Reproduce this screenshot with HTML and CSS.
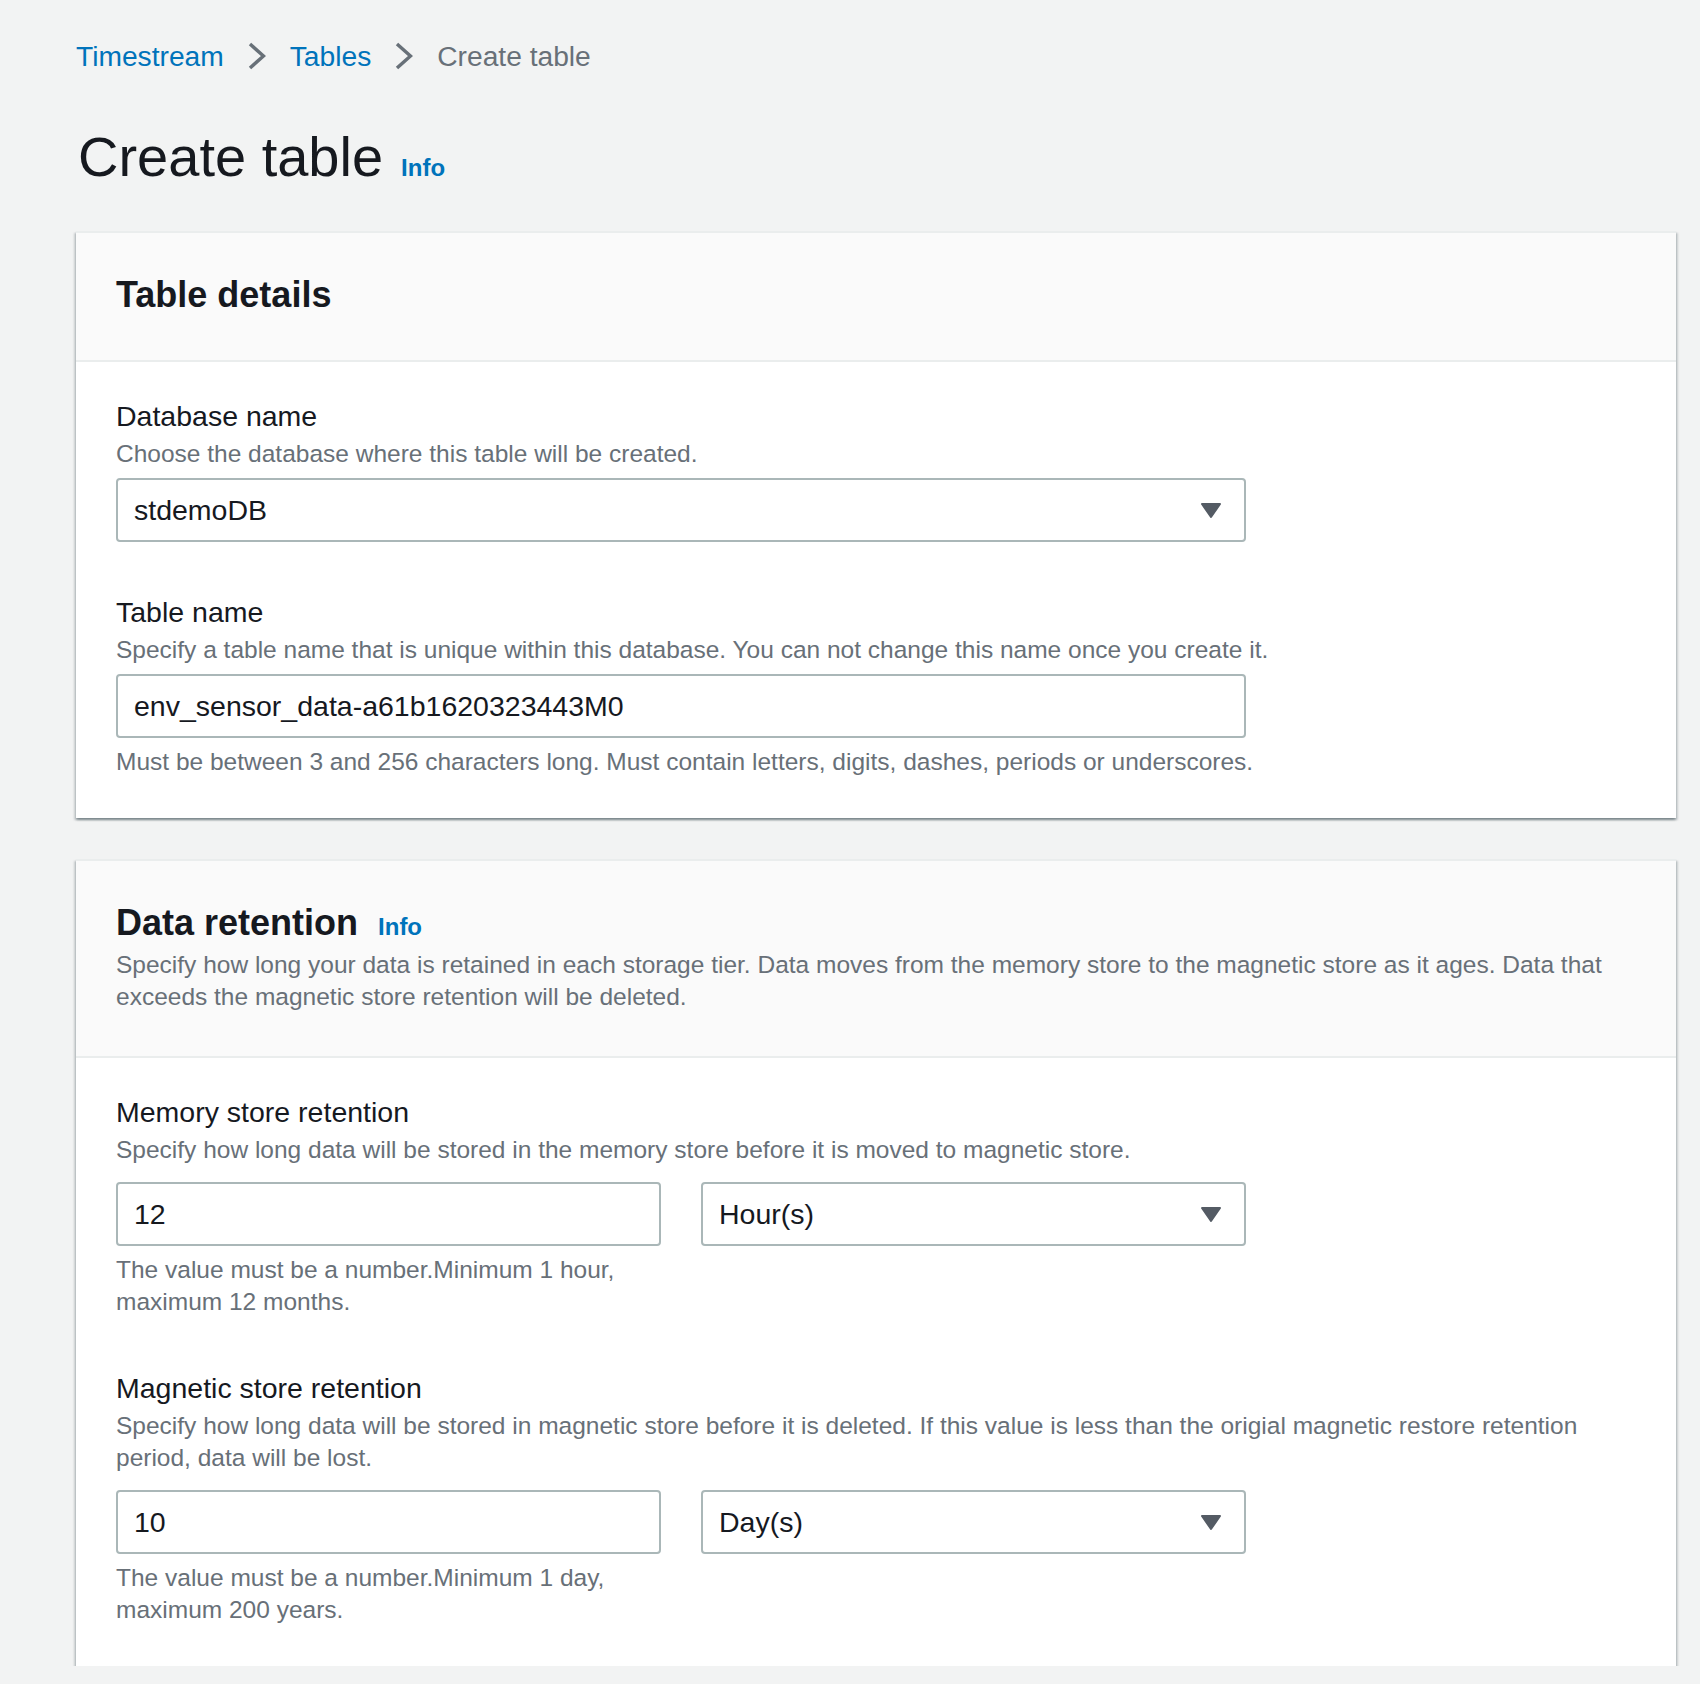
FILE: index.html
```html
<!DOCTYPE html>
<html lang="en">
<head>
<meta charset="utf-8">
<title>Create table</title>
<link rel="stylesheet" href="styles.css">
</head>
<body>
<div class="page">
  <nav class="breadcrumbs">
    <a class="crumb-link" href="#">Timestream</a>
    <svg class="crumb-sep" width="18" height="28" viewBox="0 0 18 28"><polyline points="2,2 15.5,14 2,26" fill="none" stroke="#687078" stroke-width="3.5"/></svg>
    <a class="crumb-link" href="#">Tables</a>
    <svg class="crumb-sep" width="18" height="28" viewBox="0 0 18 28"><polyline points="2,2 15.5,14 2,26" fill="none" stroke="#687078" stroke-width="3.5"/></svg>
    <span class="crumb-current">Create table</span>
  </nav>

  <h1 class="page-title">Create table<a class="info" href="#">Info</a></h1>

  <section class="panel">
    <div class="panel-header">
      <h2 class="panel-title">Table details</h2>
    </div>
    <div class="panel-body">
      <div class="field">
        <div class="label">Database name</div>
        <div class="desc">Choose the database where this table will be created.</div>
        <div class="control select">
          <span>stdemoDB</span>
          <svg class="caret" width="22" height="17" viewBox="0 0 22 17"><polygon points="2,2 20,2 11,15" fill="#545b64" stroke="#545b64" stroke-width="2" stroke-linejoin="round"/></svg>
        </div>
      </div>
      <div class="field">
        <div class="label">Table name</div>
        <div class="desc">Specify a table name that is unique within this database. You can not change this name once you create it.</div>
        <div class="control"><span>env_sensor_data-a61b1620323443M0</span></div>
        <div class="constraint">Must be between 3 and 256 characters long. Must contain letters, digits, dashes, periods or underscores.</div>
      </div>
    </div>
  </section>

  <section class="panel">
    <div class="panel-header">
      <h2 class="panel-title">Data retention<a class="info" href="#">Info</a></h2>
      <p class="header-desc">Specify how long your data is retained in each storage tier. Data moves from the memory store to the magnetic store as it ages. Data that exceeds the magnetic store retention will be deleted.</p>
    </div>
    <div class="panel-body">
      <div class="field">
        <div class="label">Memory store retention</div>
        <div class="desc">Specify how long data will be stored in the memory store before it is moved to magnetic store.</div>
        <div class="grid">
          <div class="col">
            <div class="control"><span>12</span></div>
            <div class="constraint">The value must be a number.Minimum 1 hour, maximum 12 months.</div>
          </div>
          <div class="col">
            <div class="control select">
              <span>Hour(s)</span>
              <svg class="caret" width="22" height="17" viewBox="0 0 22 17"><polygon points="2,2 20,2 11,15" fill="#545b64" stroke="#545b64" stroke-width="2" stroke-linejoin="round"/></svg>
            </div>
          </div>
        </div>
      </div>
      <div class="field">
        <div class="label">Magnetic store retention</div>
        <div class="desc">Specify how long data will be stored in magnetic store before it is deleted. If this value is less than the origial magnetic restore retention period, data will be lost.</div>
        <div class="grid">
          <div class="col">
            <div class="control"><span>10</span></div>
            <div class="constraint">The value must be a number.Minimum 1 day, maximum 200 years.</div>
          </div>
          <div class="col">
            <div class="control select">
              <span>Day(s)</span>
              <svg class="caret" width="22" height="17" viewBox="0 0 22 17"><polygon points="2,2 20,2 11,15" fill="#545b64" stroke="#545b64" stroke-width="2" stroke-linejoin="round"/></svg>
            </div>
          </div>
        </div>
      </div>
    </div>
  </section>
</div>
</body>
</html>
```
FILE: styles.css
```css
* { box-sizing: border-box; }

html, body {
  margin: 0;
  padding: 0;
  background: #f2f3f3;
}

body {
  font-family: "Liberation Sans", Arial, sans-serif;
  color: #16191f;
}

.page {
  padding: 34px 24px 0 76px;
}

.breadcrumbs {
  display: flex;
  align-items: center;
  height: 44px;
  font-size: 28.2px;
  line-height: 44px;
}

.crumb-link {
  color: #0073bb;
  text-decoration: none;
}

.crumb-sep {
  display: block;
  margin: 0 24px;
}

.crumb-current {
  color: #687078;
}

.page-title {
  margin: 43px 0 38px 2px;
  font-size: 56px;
  line-height: 72px;
  font-weight: 400;
  color: #16191f;
}

.info {
  margin-left: 18px;
  font-size: 24px;
  line-height: 1;
  font-weight: 700;
  color: #0073bb;
  text-decoration: none;
}

.panel {
  background: #ffffff;
  box-shadow: 0 2px 2px 0 rgba(0, 28, 36, 0.3), 2px 2px 2px 0 rgba(0, 28, 36, 0.15), -2px 2px 2px 0 rgba(0, 28, 36, 0.15);
  border-top: 2px solid #eaeded;
}

.panel + .panel {
  margin-top: 41px;
}

.panel-header {
  background: #fafafa;
  padding: 40px 40px 43px;
  border-bottom: 2px solid #eaeded;
}

.panel-title {
  margin: 0;
  font-size: 36px;
  line-height: 44px;
  font-weight: 700;
  color: #16191f;
}

.panel-title .info {
  margin-left: 20px;
}

.header-desc {
  margin: 4px 0 0;
  font-size: 24.5px;
  line-height: 32px;
  color: #687078;
}

.panel-body {
  padding: 32px 40px 40px;
}

.field + .field {
  margin-top: 48px;
}

.label {
  font-size: 28.5px;
  line-height: 44px;
  color: #16191f;
}

.desc {
  font-size: 24.5px;
  line-height: 32px;
  color: #687078;
}

.control {
  display: flex;
  align-items: center;
  justify-content: space-between;
  width: 1130px;
  height: 64px;
  margin-top: 8px;
  padding: 0 22px 0 16px;
  border: 2px solid #aab7b8;
  border-radius: 4px;
  background: #ffffff;
  font-size: 28.5px;
  color: #16191f;
}

.caret {
  display: block;
}

.constraint {
  margin-top: 8px;
  font-size: 24.5px;
  line-height: 32px;
  color: #687078;
}

.grid {
  display: grid;
  grid-template-columns: 545px 545px;
  column-gap: 40px;
  margin-top: 16px;
  width: 1130px;
}

.grid .control {
  width: 100%;
  margin-top: 0;
}
```
